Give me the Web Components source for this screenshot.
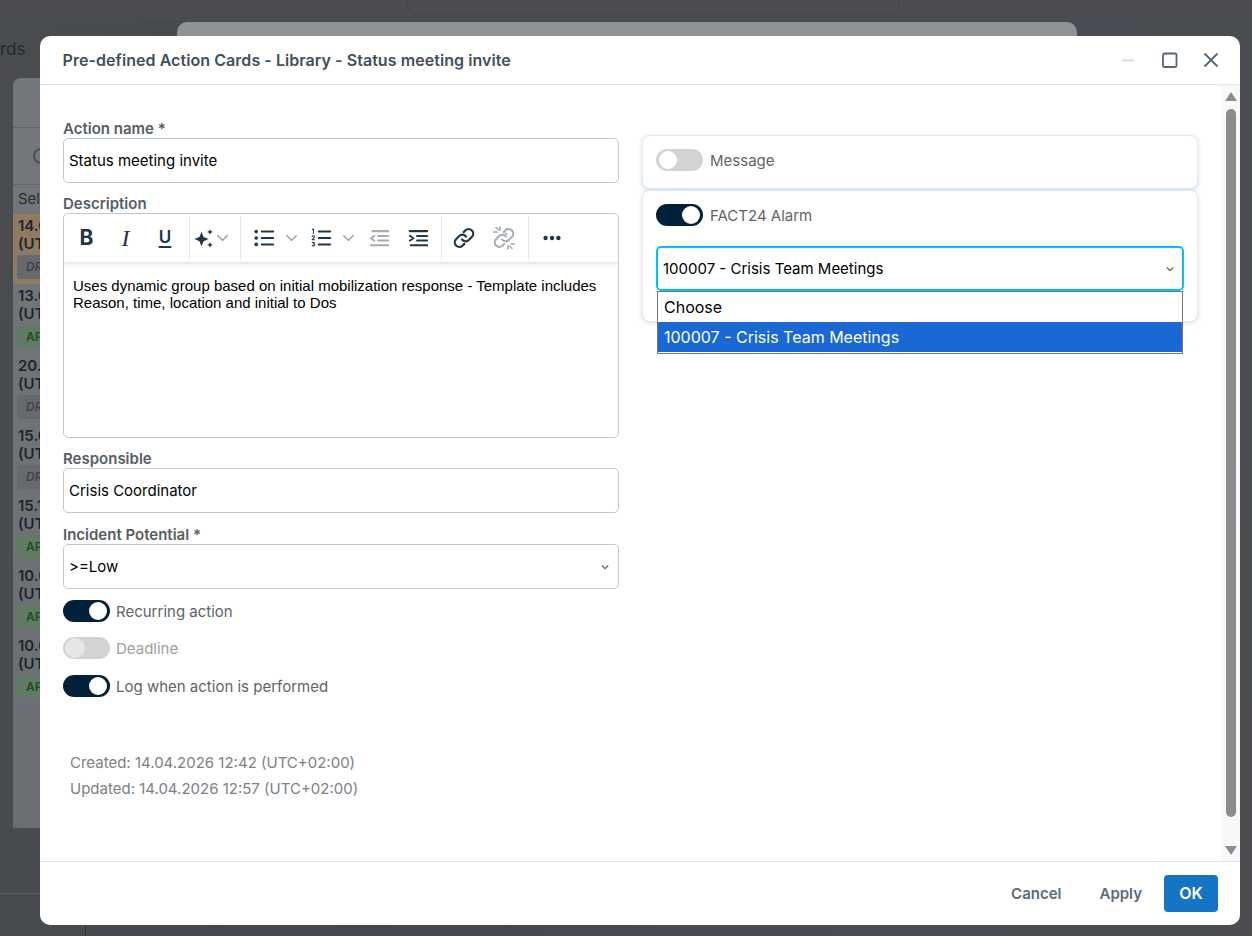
<!DOCTYPE html>
<html lang="en">
<head>
<meta charset="utf-8">
<title>Status meeting invite</title>
<style>
  html, body { margin: 0; height: 100%; }
  body { width: 1252px; height: 936px; overflow: hidden; font-family: Inter, "Liberation Sans", sans-serif; }
</style>
</head>
<body>
<page-backdrop>
  <action-dialog heading="Pre-defined Action Cards - Library - Status meeting invite">
    <div slot="left">
      <form-field label="Action name *"><text-box value="Status meeting invite"></text-box></form-field>
      <form-field label="Description"><rich-editor>Uses dynamic group based on initial mobilization response - Template includes Reason, time, location and initial to Dos</rich-editor></form-field>
      <form-field label="Responsible" style="margin-bottom:11px"><text-box value="Crisis Coordinator"></text-box></form-field>
      <form-field label="Incident Potential *"><text-box value="&gt;=Low" chevron></text-box></form-field>
      <toggle-row checked style="margin-top:11px">Recurring action</toggle-row>
      <toggle-row disabled style="margin-top:15px">Deadline</toggle-row>
      <toggle-row checked style="margin-top:16px">Log when action is performed</toggle-row>
      <audit-info created="Created: 14.04.2026 12:42 (UTC+02:00)" updated="Updated: 14.04.2026 12:57 (UTC+02:00)"></audit-info>
    </div>
    <div slot="right" style="--toggle-gap:7px">
      <option-card style="padding-top:13px;padding-bottom:17px"><toggle-row>Message</toggle-row></option-card>
      <option-card style="margin-top:1px;padding-top:13px">
        <toggle-row checked>FACT24 Alarm</toggle-row>
        <alarm-select value="100007 - Crisis Team Meetings"></alarm-select>
      </option-card>
    </div>
  </action-dialog>
</page-backdrop>

<script>
// small helper, every element just gets its markup in an open shadow root
const shadow = (el, html) => {
  el.attachShadow({ mode: 'open' }).innerHTML = html;
};

const ICONS = {
  sparkle: '<path fill="currentColor" stroke="none" d="M8.500 6l2.100 5 5 2.100-5 2.100-2.100 5-2.100-5-5-2.100 5-2.100zM17 3l.9 2 2 .9-2 .9-.9 2-.9-2-2-.9 2-.9zM17 16l.9 2 2 .9-2 .9-.9 2-.9-2-2-.9 2-.9z"/>',
  bullets: '<g fill="currentColor" stroke="none"><circle cx="3.500" cy="5" r="2"/><circle cx="3.500" cy="12" r="2"/><circle cx="3.500" cy="19" r="2"/></g><path d="M9.500 5H22M9.500 12H22M9.500 19H22" stroke-width="2.200"/>',
  numbers: '<path d="M9.500 5H22M9.500 12H22M9.500 19H22" stroke-width="2.200"/><path stroke-width="1.100" d="M2.500 2.800l1.200-.8v5M2.300 10.300c.5-1 2.800-.9 2.600.5-.1.900-2 1.700-2.600 3h2.800M2.400 17h2.400l-1.200 1.600c1.200-.1 1.700.5 1.500 1.200-.2 1-1.900 1.200-2.700.3"/>',
  outdent: '<path d="M5 4.500h17M11 9.700h11M11 14.800h11M3 20h19" stroke-width="2.200"/><path stroke-width="2" d="M7 9.500L3 12.300l4 2.700"/>',
  indent: '<path d="M3 4.500h19M11 9.700h11M11 14.800h11M4 20h18" stroke-width="2.200"/><path stroke-width="2" d="M3 9.500l4 2.800L3 15"/>',
  link: '<path stroke-width="2.200" d="M10 13.500a4.500 4.500 0 0 0 6.800.5l3.200-3.200a4.600 4.600 0 0 0-6.500-6.500l-1.800 1.800"/><path stroke-width="2.200" d="M14 10.500a4.500 4.500 0 0 0-6.800-.5L4 13.200a4.600 4.600 0 0 0 6.500 6.500l1.800-1.800"/>',
  unlink: '<path stroke-width="2" d="M14.500 8l-.8-.5M10 13.500a4.500 4.500 0 0 0 6.800.5l3.200-3.200a4.600 4.600 0 0 0-6.500-6.500l-1.800 1.800"/><path stroke-width="2" d="M14 10.500a4.500 4.500 0 0 0-6.800-.5L4 13.200a4.600 4.600 0 0 0 6.500 6.500l1.800-1.800"/><path stroke-width="1.500" d="M4 1.500l2.500 2.500M1.500 6H5M8 1v3.200M20 22.500L17.500 20M22.500 18H19M16 23v-3.200"/>',
  more: '<g fill="currentColor" stroke="none"><circle cx="5" cy="12" r="2.400"/><circle cx="12" cy="12" r="2.400"/><circle cx="19" cy="12" r="2.400"/></g>'
};

const CHEVRON = '<svg width="8" height="8" viewBox="0 0 8 8" fill="none" stroke="#666" stroke-width="1.300"><path d="M.8 2.500L4 5.700l3.200-3.200"/></svg>';

class PageBackdrop extends HTMLElement {
  constructor() {
    super();
    // only the clipped bits that show next to the dialog
    const rows = [
      ['14.0', 'DR', 'warn'], ['13.0', 'AP', 'ok'], ['20.', 'DR', ''], ['15.0', 'DR', ''],
      ['15.1', 'AP', 'ok'], ['10.0', 'AP', 'ok'], ['10.0', 'AP', 'ok']
    ].map(([d, b, c]) => `<div class="row ${c === 'warn' ? 'warn' : ''}"><b>${d}</b><b>(UT</b><i class="${c}">${b}</i></div>`).join('');
    shadow(this, `
      <style>
        :host { display: block; position: relative; width: 1252px; height: 936px; overflow: hidden;
          background: linear-gradient(100deg, #4a4c4f 0%, #43484f 30%, #474c53 70%, #4b4d50 100%); }
        .top { position: absolute; inset: 0 0 auto 0; height: 21px; background: linear-gradient(#4d4d4e, #494c50); border-bottom: 1px solid #45484c; }
        .pill { position: absolute; left: 407px; top: -30px; width: 493px; height: 45px; border: 1px solid #424548; border-radius: 12px; box-sizing: border-box; }
        .crumb { position: absolute; left: 0; top: 39px; font-size: 17px; line-height: 20px; color: #25282c; }
        .back { position: absolute; left: 177px; top: 22px; width: 900px; height: 40px; background: #8e9296; border-radius: 10px 10px 0 0; }
        .side { position: absolute; left: 13px; top: 78px; width: 27px; height: 750px; overflow: hidden; border-radius: 8px 0 0 0; background: linear-gradient(#74787c, #6a6e73); font-size: 15px; color: #1f242a; }
        .lens { position: absolute; left: 20px; top: 70px; width: 12px; height: 12px; border: 2px solid #4a4f54; border-radius: 50%; }
        .sel { position: absolute; left: 5px; top: 112px; line-height: 18px; color: #2a2e33; font-size: 15px; white-space: nowrap; }
        .rule { position: absolute; left: 0; right: 0; height: 1px; background: #63676b; }
        .list { position: absolute; left: 0; top: 136px; width: 27px; }
        .row { height: 70px; padding: 3px 0 0 5px; box-sizing: border-box; white-space: nowrap; line-height: 18px; }
        .row b { display: block; font-weight: 600; }
        .row i { display: block; margin: 2px 0 0 -1px; width: 40px; height: 24px; line-height: 24px; font-size: 12px; font-weight: 600; border-radius: 4px; padding-left: 9px; box-sizing: border-box; background: #666a6f; color: #3f4347; }
        .row i.ok { background: #617a66; color: #1f4d1d; font-style: normal; }
        .row.warn { background: #8f7a62; }
        .line-b { position: absolute; left: 0; top: 893px; width: 40px; height: 1px; background: #5a5d60; }
        .line-r { position: absolute; left: 85px; top: 925px; width: 1px; height: 11px; background: #333639; }
      </style>
      <div class="top"><div class="pill"></div></div>
      <div class="crumb">rds</div>
      <div class="back"></div>
      <div class="side">
        <div class="rule" style="top:49px"></div>
        <div class="rule" style="top:106px"></div>
        <div class="lens"></div>
        <div class="sel">Sel</div>
        <div class="list">${rows}</div>
      </div>
      <div class="line-b"></div><div class="line-r"></div>
      <slot></slot>`);
  }
}

class ActionDialog extends HTMLElement {
  constructor() {
    super();
    shadow(this, `
      <style>
        :host { position: absolute; left: 40px; top: 36px; width: 1200px; height: 889px; background: #fff; border-radius: 10px; display: flex; flex-direction: column; overflow: hidden; }
        header { height: 48px; flex: none; border-bottom: 1px solid #dde6ef; display: flex; align-items: center; padding: 0 9px 0 23px; }
        h1 { flex: 1; margin: 0; font-size: 16px; line-height: 20px; font-weight: 600; color: #434f5b; letter-spacing: 0.06px; margin-left: -0.5px; }
        .win { width: 40px; height: 24px; display: block; }
        .win svg { display: block; margin: 0 auto; }
        main { flex: 1; display: flex; min-height: 0; }
        .cols { flex: 1; display: grid; grid-template-columns: 556px 556px; column-gap: 23px; padding: 33px 0 0 23px; }
        .right { padding-top: 17px; }
        .bar { width: 19px; flex: none; background: #f8f8f8; display: flex; flex-direction: column; align-items: center; }
        .thumb { width: 10px; flex: 1; background: #8c8c8c; border-radius: 6px; }
        .arr { width: 0; height: 0; border-left: 6.500px solid transparent; border-right: 6.500px solid transparent; }
        .up { border-bottom: 9px solid #8c8c8c; margin-top: 7px; margin-bottom: 8px; }
        .down { border-top: 9px solid #8c8c8c; margin-top: 29px; margin-bottom: 6px; }
        footer { height: 64px; flex: none; border-top: 1px solid #dde3e8; display: flex; align-items: center; justify-content: flex-end; padding-right: 22px; font-size: 15px; font-weight: 600; color: #5a6b79; box-sizing: border-box; }
        footer span { display: block; }
        .cancel { margin-right: 38px; }
        .apply { margin-right: 22px; }
        .ok { width: 54px; height: 37px; line-height: 37px; text-align: center; border-radius: 4px; background: #1574c4; color: #fff; font-size: 16px; }
      </style>
      <header>
        <h1>${this.getAttribute('heading')}</h1>
        <span class="win"><svg width="24" height="24" viewBox="0 0 24 24" fill="none" stroke="#cdd3d9" stroke-width="1.600"><path d="M6 12.500h12"/></svg></span>
        <span class="win" style="margin-left:2px"><svg width="24" height="24" viewBox="0 0 24 24" fill="none" stroke="#566675" stroke-width="1.800"><rect x="5" y="5.500" width="13.500" height="13.500" rx="1.500"/></svg></span>
        <span class="win" style="margin-left:1px;width:40px"><svg width="24" height="24" viewBox="0 0 24 24" fill="none" stroke="#566675" stroke-width="1.800"><path d="M5.500 5.500l13 13M18.500 5.500l-13 13"/></svg></span>
      </header>
      <main>
        <div class="cols">
          <div><slot name="left"></slot></div>
          <div class="right"><slot name="right"></slot></div>
        </div>
        <div class="bar"><div class="arr up"></div><div class="thumb"></div><div class="arr down"></div></div>
      </main>
      <footer>
        <span class="cancel">Cancel</span><span class="apply">Apply</span><span class="ok">OK</span>
      </footer>`);
  }
}

class FormField extends HTMLElement {
  constructor() {
    super();
    shadow(this, `
      <style>
        :host { display: block; margin-bottom: 10px; }
        label { display: block; height: 20px; font-size: 15px; line-height: 22px; font-weight: 600; color: #565d64; white-space: nowrap; }
      </style>
      <label>${this.getAttribute('label')}</label>
      <slot></slot>`);
  }
}

class TextBox extends HTMLElement {
  constructor() {
    super();
    const chev = this.hasAttribute('chevron') ? CHEVRON : '';
    shadow(this, `
      <style>
        :host { display: flex; align-items: center; justify-content: space-between; height: 45px; box-sizing: border-box; border: 1px solid #bcc8d4; border-radius: 5px; padding: 0 9px 0 5px; font-size: 15px; color: #000; }
      </style>
      <span>${this.getAttribute('value')}</span>${chev}`);
  }
}

class ToolButton extends HTMLElement {
  constructor() {
    super();
    const name = this.getAttribute('icon');
    const w = this.getAttribute('width') || 39;
    const size = this.getAttribute('size') || 24;
    shadow(this, `
      <style>
        :host { display: flex; align-items: center; justify-content: center; height: 32px; width: ${w}px; flex: none; color: #22364a; }
        :host([muted]) { color: #a4abb2; }
        svg { display: block; }
      </style>
      <svg width="${size}" height="${size}" viewBox="0 0 24 24" fill="none" stroke="currentColor" stroke-linecap="round" stroke-linejoin="round">${ICONS[name] || ''}</svg>`);
  }
}

class RichEditor extends HTMLElement {
  constructor() {
    super();
    const chev = (ml) => `<svg class="chev" style="margin-left:${ml}px" width="13" height="10" viewBox="0 0 14 10" fill="none" stroke="#8b96a1" stroke-width="1.300"><path d="M1.500 2l5.500 5.500L12.500 2"/></svg>`;
    shadow(this, `
      <style>
        :host { display: block; height: 225px; box-sizing: border-box; border: 1px solid #bcc8d4; border-radius: 5px; overflow: hidden; font-family: "Liberation Sans", Arial, sans-serif; }
        .tools { height: 48px; display: flex; align-items: center; padding-left: 3px; box-shadow: 0 1px 5px rgba(120,140,160,.35); position: relative; }
        .sep { width: 1px; height: 44px; background: #e3e9ef; flex: none; }
        .ch { width: 39px; height: 32px; line-height: 32px; text-align: center; color: #22364a; flex: none; }
        .b { font: 700 21px/32px Inter, sans-serif; }
        .i { font: italic 400 24px/32px "Liberation Serif", serif; }
        .u { width: 40px; font: 600 17px/30px Inter, sans-serif; text-decoration: underline; text-decoration-thickness: 2px; text-underline-offset: 3px; }
        .chev { display: block; flex: none; }
        .text { padding: 15px 9px 0; font-size: 15px; line-height: 17px; color: #000; }
      </style>
      <div class="tools">
        <span class="ch b">B</span><span class="ch i">I</span><span class="ch u">U</span>
        <span class="sep" style="margin-left:4px"></span>
        <tool-button icon="sparkle" width="30" size="24"></tool-button>${chev(-4)}
        <span class="sep" style="margin-left:11px"></span>
        <tool-button icon="bullets" width="46" size="22"></tool-button>${chev(-2)}
        <tool-button icon="numbers" width="46" size="22"></tool-button>${chev(-2)}
        <tool-button muted icon="outdent" width="36" size="22" style="margin-left:6px"></tool-button>
        <tool-button icon="indent" width="39" size="22" style="margin-left:1.500px"></tool-button>
        <span class="sep" style="margin-left:3.500px"></span>
        <tool-button icon="link" width="44" size="24"></tool-button>
        <tool-button muted icon="unlink" width="36" size="24"></tool-button>
        <span class="sep" style="margin-left:6px"></span>
        <tool-button icon="more" width="45" size="22"></tool-button>
      </div>
      <div class="text"><slot></slot></div>`);
  }
}

class ToggleRow extends HTMLElement {
  constructor() {
    super();
    shadow(this, `
      <style>
        :host { display: flex; align-items: center; height: 22px; font-size: 15px; color: #5f6468; white-space: nowrap; }
        :host([disabled]) { color: #9b9ea1; }
        .track { width: 47px; height: 22px; border-radius: 11px; background: #d3d3d3; position: relative; flex: none; margin-right: var(--toggle-gap, 6px); }
        .knob { position: absolute; left: 3px; top: 2px; width: 18px; height: 18px; border-radius: 50%; background: #fff; }
        :host([checked]) .track { background: #01203a; }
        :host([checked]) .knob { left: 26px; }
        :host([disabled]) .knob { background: #e6e6e6; left: 2px; top: 1px; width: 20px; height: 20px; }
      </style>
      <span class="track"><span class="knob"></span></span><span><slot></slot></span>`);
  }
}

class OptionCard extends HTMLElement {
  constructor() {
    super();
    shadow(this, `
      <style>
        :host { display: block; box-sizing: border-box; border: 1px solid #e2eaf2; border-radius: 8px; padding: 14px 13px 16px; box-shadow: 0 1px 4px rgba(120,150,180,.35); background: #fff; }
      </style>
      <slot></slot>`);
  }
}

class AlarmSelect extends HTMLElement {
  constructor() {
    super();
    const v = this.getAttribute('value');
    shadow(this, `
      <style>
        :host { display: block; position: relative; margin-top: 20px; height: 45px; margin-bottom: 14px; font-size: 15px; color: #000; }
        .box { height: 45px; box-sizing: border-box; border: 2px solid #00c2f7; border-radius: 5px; display: flex; align-items: center; justify-content: space-between; padding: 0 8px 0 5px; }
        .menu { position: absolute; left: 1px; right: 1px; top: 45px; border: 1px solid #767676; background: #fff; z-index: 2; font-size: 16px; }
        .opt { height: 30px; line-height: 31px; padding-left: 6px; }
        .sel { background: #1a68d4; color: #fff; }
        .tail { height: 1px; }
      </style>
      <div class="box"><span>${v}</span>${CHEVRON}</div>
      <div class="menu"><div class="opt">Choose</div><div class="opt sel">${v}</div><div class="tail"></div></div>`);
  }
}

class AuditInfo extends HTMLElement {
  constructor() {
    super();
    shadow(this, `
      <style>
        :host { display: block; margin-top: 53px; padding-left: 7px; font-size: 15px; line-height: 26px; color: #7d8084; white-space: nowrap; }
      </style>
      <div>${this.getAttribute('created')}</div><div>${this.getAttribute('updated')}</div>`);
  }
}

customElements.define('page-backdrop', PageBackdrop);
customElements.define('action-dialog', ActionDialog);
customElements.define('form-field', FormField);
customElements.define('text-box', TextBox);
customElements.define('tool-button', ToolButton);
customElements.define('rich-editor', RichEditor);
customElements.define('toggle-row', ToggleRow);
customElements.define('option-card', OptionCard);
customElements.define('alarm-select', AlarmSelect);
customElements.define('audit-info', AuditInfo);
</script>
</body>
</html>
